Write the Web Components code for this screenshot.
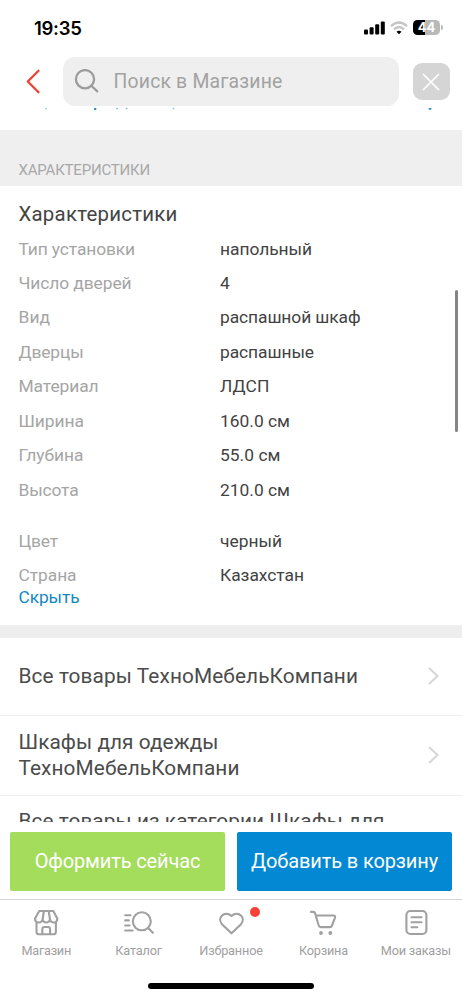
<!DOCTYPE html>
<html lang="ru">
<head>
<meta charset="utf-8">
<meta name="viewport" content="width=device-width">
<title>Магазин</title>
<style>
html,body{margin:0;padding:0;background:#fff}
body{font-family:Roboto,"Noto Sans",sans-serif;width:462px;height:1000px;overflow:hidden}
</style>
</head>
<body>
<shop-screen></shop-screen>
<script>
function define(name, html, setup) {
  customElements.define(name, class extends HTMLElement {
    constructor() {
      super();
      this.attachShadow({ mode: 'open' }).innerHTML = html;
    }
    connectedCallback() { if (setup) setup(this, this.shadowRoot); }
  });
}

/* A single line of text tracked so that it spans the width given in "w". */
define('fit-text', `<style>:host{display:inline-block;white-space:nowrap}</style><slot></slot>`, el => {
  const w = parseFloat(el.getAttribute('w'));
  const n = Array.from(el.textContent).length;
  if (!w) return;
  const natural = el.getBoundingClientRect().width;
  el.style.letterSpacing = ((w - natural) / n).toFixed(3) + 'px';
});

define('status-bar', `<style>
:host{display:flex;height:54px;box-sizing:border-box;padding:1px 19px 0 34px;align-items:center;justify-content:space-between;color:#000}
.time{font:600 18.5px/22px Inter,sans-serif}
.right{display:flex;align-items:center;gap:5px}
.bat{display:flex;align-items:center;gap:1px}
.cell{width:27px;height:15px;border-radius:4.5px;background:linear-gradient(90deg,#000 44%,#b9b9b9 44%);color:#fff;font:700 13px/15px Inter,sans-serif;text-align:center}
.nub{width:2px;height:5px;border-radius:0 2px 2px 0;background:#b9b9b9}
svg{display:block}
</style>
<fit-text class="time" w="47.5">19:35</fit-text>
<div class="right">
<svg width="21" height="14" viewBox="0 0 21 14"><rect y="8.5" width="4" height="5" rx="1"/><rect x="5.6" y="6.3" width="4" height="7.2" rx="1"/><rect x="11.2" y="3.3" width="4" height="10.2" rx="1"/><rect x="16.8" y=".4" width="4" height="13.1" rx="1"/></svg>
<svg width="18" height="14" viewBox="0 0 18 14" fill="none" stroke="#c5c5c5" stroke-width="2.4"><path d="M1 5.1Q9-2 17 5.1"/><path d="M4 8.4Q9 3.8 14 8.4"/><path d="M6.5 10.7Q9 8.8 11.5 10.7L9 13.2Z" fill="#000" stroke="none"/></svg>
<div class="bat"><div class="cell">44</div><div class="nub"></div></div>
</div>`);

define('search-header', `<style>
:host{display:flex;height:53px;box-sizing:border-box;padding:3px 12.5px 1px 26px;align-items:center}
svg{display:block;flex:none}
.field{display:flex;align-items:center;box-sizing:border-box;width:336px;height:49px;margin-left:22px;padding-left:11px;border-radius:12px;background:#efefef;color:#a2a2a2}
.field fit-text{font-size:19.4px;line-height:24px;margin-left:13.5px}
.close{display:flex;align-items:center;justify-content:center;width:37px;height:37px;margin-left:14px;border-radius:9px;background:#d5d5d5}
</style>
<svg width="15" height="26" viewBox="0 0 15 26" fill="none" stroke="#ee4136" stroke-width="2.3" stroke-linecap="round" stroke-linejoin="round"><path d="M12.5 1.7 1.8 12.5 12.5 23.3"/></svg>
<div class="field">
<svg width="26" height="26" viewBox="0 0 26 26" fill="none" stroke="#9c9c9c" stroke-width="2.3" stroke-linecap="round"><circle cx="11" cy="10.2" r="9.1"/><path d="m17.6 17 5.7 5.3"/></svg>
<fit-text w="169">Поиск в Магазине</fit-text></div>
<div class="close"><svg width="18" height="18" viewBox="0 0 18 18" stroke="#fff" stroke-width="1.7" stroke-linecap="round"><path d="m1.5 1.5 15 15m0-15-15 15"/></svg></div>`);

/* Lower edge of the link line that has scrolled under the header. */
define('scrolled-line', `<style>:host{display:block;height:23px}svg{display:block}</style>
<svg width="462" height="4" viewBox="0 0 462 4" fill="#0b83c4"><rect x="45" y=".8" width="2" height="1.6" rx=".8" opacity=".4"/><rect x="94" y="1" width="2.4" height="2" rx=".8" opacity=".95"/><rect x="116" y=".8" width="2" height="1.6" rx=".8" opacity=".5"/><rect x="125.5" y=".8" width="2" height="1.6" rx=".8" opacity=".5"/><rect x="172.5" y=".8" width="2" height="1.6" rx=".8" opacity=".45"/><rect x="428.5" y="1" width="3" height="1.7" rx=".8" opacity=".9"/></svg>`);

define('section-label', `<style>
:host{display:flex;align-items:flex-end;box-sizing:border-box;height:56px;padding:0 18.5px 6px;background:#efefef;color:#a8a8a8;font-size:15px;line-height:20px}
</style><slot></slot>`);

define('spec-list', `<style>
:host{display:block;box-sizing:border-box;height:439px;padding:15px 18px 0 18.5px}
.title{height:30.6px;line-height:26px;font-size:20.4px;color:#444}
.more{height:22px;line-height:22px;font-size:17.3px;color:#1387c1;margin-top:-6.6px}
</style><div class="title"><slot name="title"></slot></div><slot></slot><div class="more"><slot name="more"></slot></div>`);

define('spec-row', `<style>
:host{display:grid;grid-template-columns:201.5px 1fr;height:34.45px;line-height:34.45px;font-size:17.4px;color:#a5a5a5}
:host([gap]){margin-top:16.6px}
.v{color:#424242}
</style><div><slot></slot></div><div class="v"><slot name="v"></slot></div>`);

define('link-row', `<style>
:host{display:flex;align-items:center;justify-content:space-between;box-sizing:border-box;height:79.5px;padding:0 22px 0 18.5px;border-bottom:1.5px solid #efefef;font-size:20.8px;line-height:26px;color:#4b4b4b}
:host([first]){height:78.5px}
:host([last]){height:auto;align-items:flex-start;padding-top:12px;border:0}
:host([last]) svg{display:none}
.t{display:flex;flex-direction:column;align-items:flex-start}
svg{display:block}
</style><div class="t"><slot></slot></div><svg width="13" height="20" viewBox="0 0 13 20" fill="none" stroke="#d6d6d6" stroke-width="2"><path d="m2 2 8.5 8L2 18"/></svg>`);

define('action-button', `<style>
:host{display:flex;flex:1;align-items:center;justify-content:center;height:59px;border-radius:2px;background:#a4dc5c;color:#fff;font-size:20px;line-height:24px}
:host([primary]){background:#0389d3}
</style><slot></slot>`);

const icons = {
  shop: '<path d="M8.3 4h14l4 7.5c0 5-6 5.2-7.3 1-1 4-6.4 4-7.4 0-1.3 4.2-7.6 4-7.6-1Z M11.6 12.5l1.3-8.5 M19 12.5l-1.3-8.5 M5.5 15.5V24.7q0 2.6 2.6 2.6h14.2q2.6 0 2.6-2.6V15.5 M11.3 27v-4.8q0-2.2 2.2-2.2h3.4q2.2 0 2.2 2.2V27"/>',
  catalog: '<g transform="translate(-.8 0)"><path d="M2 8.3h5.3M2 13.4h3.6M2 18.5h4.4M2 23.5h7.4"/><circle cx="18.6" cy="14.3" r="9"/><path d="m25 21 4.7 4.8"/></g>',
  heart: '<path d="M15.5 26.3 6.2 17.5C.4 11 8.5 3 15.5 9 22.5 3 30.6 11 24.8 17.5Z"/>',
  cart: '<path d="M3 4.9h2.3q1.4 0 1.8 1.4l3.5 12q.5 1.8 2.3 1.8h8.8q1.8 0 2.4-1.8l2.9-7.7q.7-2.1-1.5-2.1H8"/><g fill="#a0a0a0" stroke="none"><circle cx="13" cy="26" r="1.9"/><circle cx="22.3" cy="26" r="1.9"/></g>',
  orders: '<rect x="5.4" y="4" width="20" height="23" rx="4"/><path d="M10.5 10.2h10M10.5 15.2h10M10.5 20.2h5.8"/>'
};
define('tab-item', `<style>
:host{display:flex;flex:1;flex-direction:column;align-items:center;font-size:12.7px;line-height:17px;color:#a0a0a0}
.i{display:block;position:relative;width:30px;height:30px;margin-bottom:4.5px}
svg{display:block;overflow:visible}
.dot{display:none;position:absolute;left:34px;top:-.5px;width:10px;height:10px;border-radius:50%;background:#f54337}
:host([badge]) .dot{display:block}
</style><div class="i"><svg width="30" height="30" viewBox="0 0 30 30" fill="none" stroke="#a0a0a0" stroke-width="2.1" stroke-linecap="round" stroke-linejoin="round"></svg><div class="dot"></div></div><slot></slot>`,
(el, root) => { root.querySelector('svg').innerHTML = icons[el.getAttribute('icon')]; });

define('tab-bar', `<style>:host{display:flex;box-sizing:border-box;height:84px;padding-top:7px;border-top:1px solid #d6d6d6}</style><slot></slot>`);

define('shop-screen', `<style>
:host{display:flex;flex-direction:column;position:relative;width:462px;height:1000px;overflow:hidden;background:#fff}
status-bar,search-header,tab-bar{flex:none}
.body{height:714.5px;overflow:hidden;flex:none}
.divider{height:12.5px;background:#eee}
.actions{display:flex;gap:12px;padding:10px 10px 8.5px;flex:none}
.scroll{position:absolute;right:4px;top:289.5px;width:3.5px;height:142px;border-radius:2px;background:#858585}
.home{width:166px;height:6px;border-radius:3px;background:#000;margin:0 auto}
</style>
<status-bar></status-bar>
<search-header></search-header>
<div class="body">
<scrolled-line></scrolled-line>
<section-label><fit-text w="131.5">ХАРАКТЕРИСТИКИ</fit-text></section-label>
<spec-list>
<fit-text slot="title" w="159">Характеристики</fit-text>
<spec-row><fit-text w="116.5">Тип установки</fit-text><fit-text slot="v" w="92">напольный</fit-text></spec-row>
<spec-row><fit-text w="113">Число дверей</fit-text><fit-text slot="v">4</fit-text></spec-row>
<spec-row><fit-text w="31.5">Вид</fit-text><fit-text slot="v" w="140.5">распашной шкаф</fit-text></spec-row>
<spec-row><fit-text w="65">Дверцы</fit-text><fit-text slot="v" w="94">распашные</fit-text></spec-row>
<spec-row><fit-text w="80">Материал</fit-text><fit-text slot="v" w="49.5">ЛДСП</fit-text></spec-row>
<spec-row><fit-text w="65.5">Ширина</fit-text><fit-text slot="v" w="70">160.0 см</fit-text></spec-row>
<spec-row><fit-text w="65">Глубина</fit-text><fit-text slot="v" w="60.5">55.0 см</fit-text></spec-row>
<spec-row><fit-text w="60">Высота</fit-text><fit-text slot="v" w="70">210.0 см</fit-text></spec-row>
<spec-row gap><fit-text w="39.5">Цвет</fit-text><fit-text slot="v" w="62">черный</fit-text></spec-row>
<spec-row><fit-text w="58">Страна</fit-text><fit-text slot="v" w="84">Казахстан</fit-text></spec-row>
<fit-text slot="more" w="61">Скрыть</fit-text>
</spec-list>
<div class="divider"></div>
<link-row first><fit-text w="339.5">Все товары ТехноМебельКомпани</fit-text></link-row>
<link-row><fit-text w="200">Шкафы для одежды</fit-text><fit-text w="221">ТехноМебельКомпани</fit-text></link-row>
<link-row last><fit-text w="366">Все товары из категории Шкафы для</fit-text></link-row>
</div>
<div class="actions">
<action-button><fit-text w="165.5">Оформить сейчас</fit-text></action-button>
<action-button primary><fit-text w="187">Добавить в корзину</fit-text></action-button>
</div>
<tab-bar>
<tab-item icon="shop"><fit-text w="49.5">Магазин</fit-text></tab-item>
<tab-item icon="catalog"><fit-text w="46.5">Каталог</fit-text></tab-item>
<tab-item icon="heart" badge><fit-text w="63.5">Избранное</fit-text></tab-item>
<tab-item icon="cart"><fit-text w="49">Корзина</fit-text></tab-item>
<tab-item icon="orders"><fit-text w="70">Мои заказы</fit-text></tab-item>
</tab-bar>
<div class="home"></div>
<div class="scroll"></div>`);
</script>
</body>
</html>
